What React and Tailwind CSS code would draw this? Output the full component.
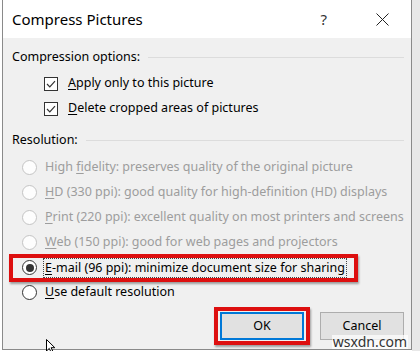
import React from "react";

const font = { fontFamily: '"Noto Sans", "Open Sans", sans-serif' };

function Checkbox() {
    return (
        <span className="w-[14px] h-[14px] border border-[#333333] bg-white flex items-center justify-center shrink-0">
            <svg width="10" height="8" viewBox="0 0 10 8">
                <path d="M1 4 L3.8 6.8 L9 1.2" fill="none" stroke="#333333" strokeWidth="1.2" />
            </svg>
        </span>
    );
}

function Radio({ checked, disabled }) {
    return (
        <span
            className={`w-[15px] h-[15px] rounded-full border flex items-center justify-center shrink-0 ${
                disabled ? "border-[#c4c4c4] bg-[#fdfdfd]" : "border-[#333333] bg-white"
            }`}
        >
            {checked && <span className="w-[8px] h-[8px] rounded-full bg-[#333333]" />}
        </span>
    );
}

function GroupHeader({ label }) {
    return (
        <div className="h-[22px] flex items-center pl-[9px] pr-[7px]">
            <span className="text-[12.5px] text-black whitespace-nowrap">{label}</span>
            <span className="flex-1 h-px bg-[#dcdcdc] ml-[8px]" />
        </div>
    );
}

function Mnemonic({ text, at = 0 }) {
    return (
        <>
            {text.slice(0, at)}
            <span className="underline underline-offset-2">{text[at]}</span>
            {text.slice(at + 1)}
        </>
    );
}

const resolutions = [
    { text: "High fidelity: preserves quality of the original picture", at: 5 },
    { text: "HD (330 ppi): good quality for high-definition (HD) displays", at: 0 },
    { text: "Print (220 ppi): excellent quality on most printers and screens", at: 0 },
    { text: "Web (150 ppi): good for web pages and projectors", at: 0 },
];

export default function App() {
    return (
        <div className="w-[420px] h-[351px] bg-white flex overflow-hidden relative" style={font}>
            <div className="w-[2px] shrink-0" />

            {/* Dialog */}
            <div className="w-[410px] h-[350px] shrink-0 border-x border-b border-[#8a8a8a] bg-[#f0f0f0] flex flex-col">
                {/* Title bar */}
                <div className="h-[38px] bg-white flex items-center pl-[9px]">
                    <span className="text-[15px] text-black">Compress Pictures</span>
                    <span className="ml-auto text-[15px] text-[#333333] mr-[49px]">?</span>
                    <svg width="13" height="13" viewBox="0 0 13 13" className="mr-[22px]">
                        <path d="M0.5 0.5 L12.5 12.5 M12.5 0.5 L0.5 12.5" stroke="#222222" strokeWidth="1" />
                    </svg>
                </div>

                <div className="pt-[8px]">
                    <GroupHeader label="Compression options:" />

                    <div className="pl-[41px] pt-[3px]">
                        <div className="h-[25px] flex items-center gap-[10px]">
                            <Checkbox />
                            <span className="text-[12.5px] text-black">
                                <Mnemonic text="Apply only to this picture" />
                            </span>
                        </div>
                        <div className="h-[25px] flex items-center gap-[10px]">
                            <Checkbox />
                            <span className="text-[12.5px] text-black">
                                <Mnemonic text="Delete cropped areas of pictures" />
                            </span>
                        </div>
                    </div>

                    <div className="pt-[8px]">
                        <GroupHeader label="Resolution:" />
                    </div>

                    <div className="pl-[19px] pt-[4px]">
                        {resolutions.map((r) => (
                            <div key={r.text} className="h-[25px] flex items-center gap-[8px]">
                                <Radio disabled />
                                <span className="text-[12.5px] text-[#9d9d9d] whitespace-nowrap">
                                    <Mnemonic text={r.text} at={r.at} />
                                </span>
                            </div>
                        ))}

                        <div className="h-[25px] flex items-center gap-[8px] relative">
                            <Radio checked />
                            <span className="text-[12.5px] text-black whitespace-nowrap outline outline-1 outline-dotted outline-[#444444] px-[1px] -ml-[1px] leading-[18px]">
                                <Mnemonic text="E-mail (96 ppi): minimize document size for sharing" />
                            </span>
                            {/* red annotation */}
                            <span className="absolute left-[-13px] top-[-1px] w-[349px] h-[28px] border-[4px] border-[#dd0f0f] shadow-[1px_2px_2px_rgba(0,0,0,0.35)] pointer-events-none" />
                        </div>

                        <div className="h-[25px] flex items-center gap-[8px]">
                            <Radio />
                            <span className="text-[12.5px] text-black">
                                <Mnemonic text="Use default resolution" />
                            </span>
                        </div>
                    </div>

                    {/* Buttons */}
                    <div className="flex justify-end gap-[16px] pr-[7px] pt-[7px]">
                        <div className="relative">
                            <button className="w-[84px] h-[28px] bg-[#e1e1e1] border-2 border-[#0078d7] text-[12.5px] text-black">
                                OK
                            </button>
                            <span className="absolute left-[-6px] top-[-5px] w-[96px] h-[38px] border-[4px] border-[#dd0f0f] shadow-[1px_2px_2px_rgba(0,0,0,0.35)] pointer-events-none" />
                        </div>
                        <button className="w-[84px] h-[28px] bg-[#e1e1e1] border border-[#adadad] text-[12.5px] text-black">
                            Cancel
                        </button>
                    </div>
                </div>
            </div>

            <div className="flex-1 bg-[#e8e8e8]" />

            {/* watermark */}
            <span className="absolute right-[12px] bottom-[2px] text-[14px] leading-[14px] text-[#333333] bg-white/70 px-[1px]">
                wsxdn.com
            </span>

            {/* mouse cursor */}
            <svg width="10" height="14" viewBox="0 0 10 14" className="absolute left-[46px] top-[339px]">
                <path d="M0.5 0.5 L0.5 12 L3.3 9.4 L5.2 13.5 L7 12.7 L5.1 8.7 L8.8 8.7 Z" fill="white" stroke="black" strokeWidth="1" />
            </svg>
        </div>
    );
}
